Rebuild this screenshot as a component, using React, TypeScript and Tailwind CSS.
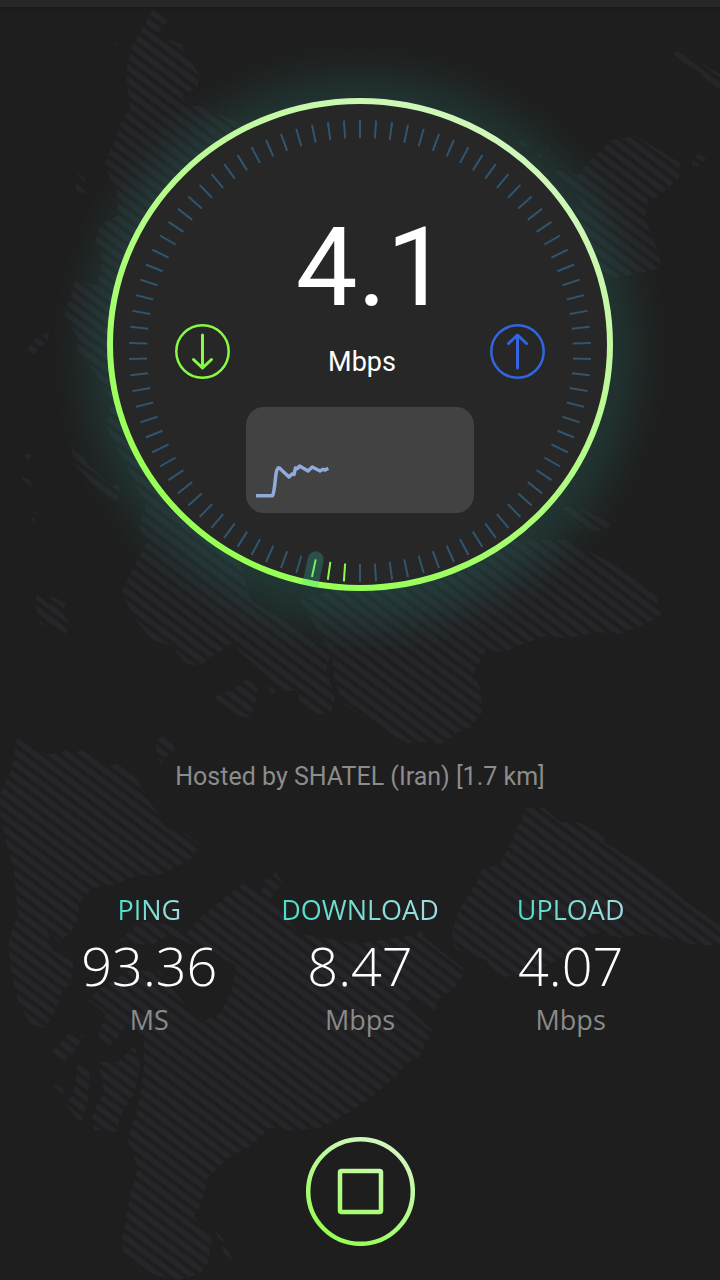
import { useId } from 'react'

interface Stat {
  label: string
  value: string
  unit: string
}

const STATS: Stat[] = [
  { label: 'PING', value: '93.36', unit: 'MS' },
  { label: 'DOWNLOAD', value: '8.47', unit: 'Mbps' },
  { label: 'UPLOAD', value: '4.07', unit: 'Mbps' },
]

const TICK_COUNT = 90
const LIT_TICKS = [46, 47, 48]
const NEEDLE_TICK = 48

// Land outlines, hatched by the stripe pattern
const LAND = [
  'M153 8 168 19 161 30 155 35 178 43 199 74 198 87 183 95 188 108 200 105 247 127 300 200 200 400 250 600 332 650 326 672 335 698 331 712 312 716 300 706 298 690 283 692 262 672 240 652 234 642 222 650 212 656 200 666 186 664 172 646 152 640 134 618 122 592 132 570 147 541 139 526 146 506 128 470 106 425 112 400 96 374 78 350 77 335 64 316 76 280 98 286 102 258 96 240 101 224 118 216 117 192 104 165 113 145 120 125 130 108 127 82 127 66 132 46 143 28Z',
  'M300 600 440 560 502 541 550 540 566 540 598 556 624 569 655 590 661 616 640 626 620 634 598 632 570 638 545 636 520 645 505 652 486 651 474 672 481 692 482 712 470 728 458 732 442 744 428 742 408 743 392 736 376 724 364 718 346 706 334 680 332 655Z',
  'M556 172 568 170 578 176 592 158 612 140 636 136 662 152 680 163 679 178 660 195 648 202 645 216 650 232 657 250 662 268 640 273 618 278 605 276 570 220 582 204 572 188Z',
  'M558 510 574 505 590 513 614 524 600 531 580 528Z',
  'M672 60 674 54 681 48 694 58 706 66 720 74 720 89 708 84 700 72 686 64Z',
  'M692 160 698 154 706 158 700 166 693 166Z',
  'M538 152 542 150 545 156 538 158Z M546 147 549 145 549 152Z M519 137 524 138 530 147 522 146Z',
  'M113 38 119 42 119 46 114 43Z M176 43 183 44 181 49Z',
  'M82 150 86 147 86 154Z M78 170 85 175 84 181 79 176Z M76 180 86 190 84 194 76 190Z M90 182 96 180 94 184Z M96 173 101 172 99 178Z',
  'M26 350 36 338 50 330 48 340 40 348 30 358Z',
  'M69 440 76 448 88 464 112 486 119 484 121 494 115 501 94 486 76 466Z',
  'M24 455 31 453 29 461Z M21 476 30 480 33 487 24 484Z M30 511 38 514 33 524Z',
  'M36 594 42 598 50 606 52 596 66 604 62 612 71 626 65 634 50 626 40 624 37 612Z',
  'M156 742 163 734 174 744 174 752 164 758 162 765 158 760Z',
  'M210 700 224 692 232 690 250 676 258 690 256 700 250 718 238 716 228 708Z M268 686 276 690 272 700Z',
  'M18 733 24 738 42 754 60 754 66 750 76 752 88 748 108 766 118 764 138 778 142 792 157 812 166 828 186 834 200 844 192 858 170 870 156 877 140 874 116 884 92 888 80 902 76 926 60 942 48 932 52 950 74 962 70 984 62 990 56 1010 44 1028 30 1024 18 1000 10 966 9 940 18 914 14 870 5 838 0 812 0 794 12 768Z',
  'M88 1000 98 990 130 970 160 972 178 996 200 1022 220 1014 232 990 236 966 210 950 190 944 170 934 150 946 120 940 140 922 166 924 186 934 204 914 232 892 244 882 262 892 264 882 276 872 282 882 270 900 300 934 360 944 420 934 460 966 466 972 452 990 436 1000 436 1012 412 996 406 1006 432 1030 420 1056 408 1062 394 1078 370 1098 350 1112 320 1128 290 1130 270 1128 250 1146 228 1158 208 1178 200 1206 194 1216 212 1240 208 1262 200 1274 178 1280 142 1272 124 1256 122 1240 131 1192 138 1168 128 1140 138 1108 144 1070 144 1040 128 1024 110 1046 98 1036 106 1014Z',
  'M98 1062 118 1062 134 1046 140 1066 134 1094 122 1112 116 1132 94 1130 92 1116 104 1092Z',
  'M55 1080 66 1090 62 1094 54 1086Z M78 1062 90 1070 88 1100 80 1124 66 1104 74 1092Z M48 1054 58 1046 68 1034 84 1036 74 1052 62 1062Z',
  'M526 808 544 808 560 822 578 822 604 836 604 842 630 858 656 876 684 900 720 926 720 946 690 944 668 938 640 934 620 938 600 932 584 936 560 958 540 970 520 974 500 978 486 960 454 948 452 934 458 912 468 896 478 880 482 870 500 864 508 848 516 832Z',
  'M418 932 422 930 424 940 416 946Z M215 1230 224 1240 236 1270 228 1262Z',
]

function WorldBackdrop() {
  const id = useId()
  return (
    <svg viewBox="0 0 720 1280" className="absolute inset-x-0 top-0 w-full" aria-hidden="true">
      <defs>
        <pattern id={id} width="20" height="9.75" patternUnits="userSpaceOnUse" patternTransform="rotate(37)">
          <rect y="3.3" width="20" height="5.6" fill="#25252a" />
        </pattern>
      </defs>
      {LAND.map((d) => (
        <path key={d} d={d} fill={`url(#${id})`} />
      ))}
    </svg>
  )
}

function Dial() {
  const glow = useId()
  const ring = useId()
  return (
    <svg viewBox="0 0 720 640" className="col-start-1 row-start-1 w-full" aria-hidden="true">
      <defs>
        <radialGradient id={glow} gradientUnits="userSpaceOnUse" cx="360" cy="344" r="308">
          <stop offset="0.78" stopColor="#26695f" stopOpacity="0.34" />
          <stop offset="0.86" stopColor="#26695f" stopOpacity="0.22" />
          <stop offset="0.94" stopColor="#26695f" stopOpacity="0.07" />
          <stop offset="1" stopColor="#26695f" stopOpacity="0" />
        </radialGradient>
        <linearGradient id={ring} gradientUnits="userSpaceOnUse" x1="250" y1="520" x2="480" y2="130">
          <stop offset="0" stopColor="#98ff55" />
          <stop offset="1" stopColor="#d0f7ba" />
        </linearGradient>
      </defs>
      <circle cx="360" cy="344" r="308" fill={`url(#${glow})`} />
      <ellipse cx="360" cy="337.5" rx="250" ry="243.5" fill="#272727" stroke={`url(#${ring})`} strokeWidth="6" />
      {Array.from({ length: TICK_COUNT }, (_, i) => (
        <line
          key={i}
          x1="360"
          x2="360"
          y1="113"
          y2="131"
          stroke={LIT_TICKS.includes(i) ? '#8dfc48' : '#31556f'}
          strokeWidth="2"
          transform={`rotate(${(i * 360) / TICK_COUNT} 360 344)`}
        />
      ))}
      {/* current position marker */}
      <path
        d="M352 104V131a8 8 0 0 0 16 0V104Z"
        fill="#2fd0b0"
        fillOpacity="0.25"
        transform={`rotate(${(NEEDLE_TICK * 360) / TICK_COUNT} 360 344)`}
      />
    </svg>
  )
}

function DirectionIcon({ up = false }: { up?: boolean }) {
  return (
    <svg
      viewBox="0 0 56 56"
      className={up ? 'size-14 text-[#3465e0]' : 'size-14 text-[#87fb42]'}
      fill="none"
      stroke="currentColor"
      strokeLinecap="round"
      strokeLinejoin="round"
      role="img"
      aria-label={up ? 'Upload' : 'Download'}
    >
      <circle cx="27.5" cy="27.5" r="26.2" strokeWidth="2.5" />
      <path d={up ? 'M27.5 44V11M18.5 19.5 27.5 11 36.5 19.5' : 'M27.5 11V44M18.5 35.5 27.5 44 36.5 35.5'} strokeWidth="3" />
    </svg>
  )
}

function SpeedChart() {
  return (
    <svg viewBox="0 0 228 106" className="mt-[27px] w-[228px] rounded-[18px] bg-[#424242]" aria-hidden="true">
      <path
        d="M10 88.7H26.5C29 84 29 70 30.5 64.5 31.5 60 33 60 34.5 62L43 70 46 67 48 67.5 49.5 61 51.5 61.5 53.7 59 62 64 66.3 60 74 64 77 62.3 79 63 82.3 61.3"
        fill="none"
        stroke="#90aad9"
        strokeWidth="3.5"
        strokeLinejoin="round"
      />
    </svg>
  )
}

function StopButton() {
  const id = useId()
  return (
    <button type="button" aria-label="Stop test" className="mt-[98px] cursor-pointer rounded-full">
      <svg viewBox="0 0 110 110" className="size-[110px]" fill="none" strokeWidth="4.5">
        <defs>
          <linearGradient id={id} gradientUnits="userSpaceOnUse" x1="32" y1="98" x2="78" y2="14">
            <stop offset="0" stopColor="#98ff55" />
            <stop offset="1" stopColor="#d0f7ba" />
          </linearGradient>
        </defs>
        <circle cx="55.5" cy="55.5" r="52.3" stroke={`url(#${id})`} />
        <rect x="35" y="35" width="41" height="41" rx="1.5" stroke={`url(#${id})`} />
      </svg>
    </button>
  )
}

export default function App() {
  return (
    <div className="relative min-h-screen overflow-hidden bg-[#1e1e1e] font-['Roboto',sans-serif] text-white">
      <WorldBackdrop />
      <div className="relative h-[7px] bg-[#272727] shadow-[0_1px_4px_#1a1a1a]" />
      <main className="relative flex flex-col items-center pb-8">
        <section className="grid w-full">
          <Dial />
          <div className="col-start-1 row-start-1 flex flex-col items-center pt-[205px]">
            <p className="pl-6 text-[110px] leading-[112px]">4.1</p>
            <div className="flex w-[371px] items-end justify-between">
              <DirectionIcon />
              <span className="pl-1 text-[27px] leading-9">Mbps</span>
              <DirectionIcon up />
            </div>
            <SpeedChart />
          </div>
        </section>

        <p className="mt-[115px] text-[25px] leading-[30px] text-[#8c8c8c]">Hosted by SHATEL (Iran) [1.7 km]</p>

        <dl className="mt-[100px] grid w-full grid-cols-3 px-11 font-['Open_Sans',sans-serif]">
          {STATS.map((stat) => (
            <div key={stat.label} className="flex flex-col items-center gap-1">
              <dt className="bg-linear-to-r from-[#48dfc8] to-[#a0dce2] bg-clip-text text-[27px] leading-9 text-transparent">
                {stat.label}
              </dt>
              <dd className="text-[54px] leading-[66px] font-light">{stat.value}</dd>
              <dd className="text-[27px] leading-9 text-[#8a8a8a]">{stat.unit}</dd>
            </div>
          ))}
        </dl>

        <StopButton />
      </main>
    </div>
  )
}
